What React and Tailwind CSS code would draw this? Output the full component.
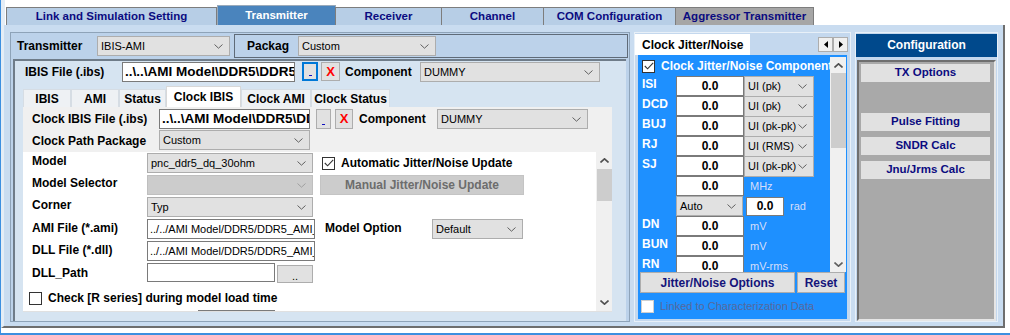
import React from "react";

const navy = "text-[#0b0b80]";

function Chevron({ color = "#5a5a5a", up = false, bold = false }) {
  return (
    <svg width="9" height="5" viewBox="0 0 9 5" className="shrink-0">
      <path
        d={up ? "M0.5 4.5L4.5 0.8L8.5 4.5" : "M0.5 0.5L4.5 4.2L8.5 0.5"}
        fill="none"
        stroke={color}
        strokeWidth={bold ? 1.6 : 1}
      />
    </svg>
  );
}

function Select({ value, w, h = "h-[20px]", disabled = false }) {
  return (
    <div
      className={`${w} ${h} shrink-0 flex items-center justify-between pl-[3px] pr-[6px] border ${
        disabled ? "bg-[#cccccc] border-[#bfbfbf]" : "bg-[#e1e1e1] border-[#adadad]"
      } text-[11px] text-black whitespace-nowrap overflow-hidden`}
    >
      <span>{value}</span>
      <Chevron color={disabled ? "#a0a0a0" : "#606060"} />
    </div>
  );
}

function Field({ value, w, bold = true, center = false, h = "h-[20px]", size = "text-[12px]" }) {
  return (
    <div
      className={`${w} ${h} shrink-0 bg-white border border-[#7a7a7a] px-[2px] flex items-center ${
        center ? "justify-center" : ""
      } ${bold ? `font-bold ${size}` : "text-[11px]"} text-black whitespace-nowrap overflow-hidden`}
    >
      {value}
    </div>
  );
}

function Check({ checked = true, dim = false }) {
  return (
    <div
      className={`w-[13px] h-[13px] shrink-0 bg-white border ${
        dim ? "border-[#cfcfcf]" : "border-[#333]"
      } flex items-center justify-center`}
    >
      {checked && (
        <svg width="10" height="8" viewBox="0 0 10 8">
          <path d="M0.8 4L3.6 6.8L9.2 0.8" fill="none" stroke="#333" strokeWidth="1.1" />
        </svg>
      )}
    </div>
  );
}

function DotButton({ focused = false, w = "w-[16px]", h = "h-[19px]" }) {
  return (
    <div
      className={`${w} ${h} shrink-0 bg-[#e1e1e1] border ${
        focused ? "border-2 border-[#0078d7]" : "border-[#adadad]"
      } flex items-end justify-center pb-[3px]`}
    >
      <div className="w-[3px] h-[1px] bg-[#1010c0]" />
    </div>
  );
}

function XButton({ w = "w-[19px]", h = "h-[19px]" }) {
  return (
    <div
      className={`${w} ${h} shrink-0 bg-[#e1e1e1] border border-[#adadad] flex items-center justify-center text-[13px] font-bold text-[#ff0000]`}
    >
      X
    </div>
  );
}

function Label({ children, className = "" }) {
  return <span className={`text-[12px] font-bold text-black whitespace-nowrap ${className}`}>{children}</span>;
}

function TopTab({ label, w, selected, gray }) {
  if (selected) {
    return (
      <div
        className={`${w} h-[20px] bg-[#4a84bd] border border-[#9ab] border-b-0 flex items-center justify-center text-[11.5px] font-bold text-white`}
      >
        {label}
      </div>
    );
  }
  return (
    <div
      className={`${w} h-[18px] ${
        gray ? "bg-[#a6a6a6]" : "bg-[#b7cee6]"
      } border border-[#7d7d7d] border-b-0 -ml-px flex items-center justify-center text-[11.5px] font-bold ${navy}`}
    >
      {label}
    </div>
  );
}

function SubTab({ label, w, selected }) {
  return (
    <div
      className={`${w} ${
        selected ? "h-[21px] bg-white border-[#d8d8d8]" : "h-[18px] bg-[#eef1f4] border-[#d6dde4]"
      } border border-b-0 flex items-center justify-center text-[12px] font-bold text-black whitespace-nowrap`}
    >
      {label}
    </div>
  );
}

function JRow({ label, unit, children }) {
  return (
    <div className="h-[20px] flex items-center">
      <span className="w-[38px] shrink-0 text-[12px] font-bold text-white pl-[4px] -mt-[4px]">{label}</span>
      {children}
      {unit && <span className="ml-[6px] text-[11px] text-[#d6defa]">{unit}</span>}
    </div>
  );
}

function CfgButton({ label, mt }) {
  return (
    <div
      className={`${mt} ml-[2px] w-[129px] h-[18px] bg-[#e1e1e1] flex items-center justify-center text-[11.5px] font-bold ${navy}`}
    >
      {label}
    </div>
  );
}

export default function App() {
  return (
    <div className="w-[1010px] h-[335px] overflow-hidden bg-white font-['Liberation_Sans',Arial,sans-serif] border-l border-[#3c8fe0]">
      {/* top tabs */}
      <div className="h-[25px] flex items-end pl-[2px] border-l-[4px] border-[#e4edf6]">
        <TopTab label="Link and Simulation Setting" w="w-[211px]" />
        <TopTab label="Transmitter" w="w-[119px]" selected />
        <TopTab label="Receiver" w="w-[107px]" />
        <TopTab label="Channel" w="w-[103px]" />
        <TopTab label="COM Configuration" w="w-[133px]" />
        <TopTab label="Aggressor Transmitter" w="w-[139px]" gray />
      </div>

      {/* body */}
      <div className="h-[303px] w-[1004px] bg-[#c9dcf0] border-l-[3px] border-[#e4edf6] border-r-2 border-r-[#6e6e6e] border-b-2 border-b-[#6e6e6e] flex pt-[7px] pl-[6px]">
        {/* left panel */}
        <div className="w-[620px] h-[290px] bg-[#bcd2ea] border border-[#8ea3b8] flex flex-col">
          <div className="h-[26px] flex items-center">
            <Label className="ml-[6px] w-[80px]">Transmitter</Label>
            <Select value="IBIS-AMI" w="w-[133px]" />
            <div className="ml-[4px] w-[394px] h-[24px] border border-[#5f6b78] flex items-center">
              <Label className="ml-[12px] w-[51px]">Packag</Label>
              <Select value="Custom" w="w-[138px]" />
            </div>
          </div>

          <div className="ml-[2px] w-[613px] flex-1 min-h-0 bg-[#d6e4f1] border-l-2 border-t-2 border-[#6f7c89] flex flex-col">
            <div className="h-[21px] mt-[1px] flex items-start">
              <Label className="ml-[10px] w-[97px] mt-[1px]">IBIS File (.ibs)</Label>
              <Field value="..\..\AMI Model\DDR5\DDR5_AMI" w="w-[173px]" size="text-[13.5px]" />
              <div className="ml-[7px]">
                <DotButton focused />
              </div>
              <div className="ml-[3px]">
                <XButton />
              </div>
              <Label className="ml-[5px] w-[75px] mt-[1px]">Component</Label>
              <Select value="DUMMY" w="w-[180px]" />
            </div>

            <div className="mt-[3px] h-[21px] ml-[8px] flex items-end">
              <SubTab label="IBIS" w="w-[48px]" />
              <SubTab label="AMI" w="w-[48px]" />
              <SubTab label="Status" w="w-[47px]" />
              <SubTab label="Clock IBIS" w="w-[75px]" selected />
              <SubTab label="Clock AMI" w="w-[70px]" />
              <SubTab label="Clock Status" w="w-[79px]" />
            </div>

            <div className="ml-[8px] w-[589px] h-[205px] shrink-0 flex flex-col border-b border-[#e0e0e0] overflow-hidden">
              <div className="h-[45px] shrink-0 bg-[#f0f0f0] flex flex-col pt-[2px]">
                <div className="h-[21px] flex items-start">
                  <Label className="ml-[9px] w-[127px] mt-[1px]">Clock IBIS File (.ibs)</Label>
                  <Field value="..\..\AMI Model\DDR5\DDR5_AMI" w="w-[151px]" size="text-[13.5px]" />
                  <div className="ml-[6px]">
                    <DotButton w="w-[15px]" h="h-[20px]" />
                  </div>
                  <div className="ml-[4px]">
                    <XButton w="w-[18px]" h="h-[20px]" />
                  </div>
                  <Label className="ml-[6px] w-[78px] mt-[1px]">Component</Label>
                  <Select value="DUMMY" w="w-[151px]" />
                </div>
                <div className="h-[21px] flex items-start">
                  <Label className="ml-[9px] w-[127px] mt-[2px]">Clock Path Package</Label>
                  <Select value="Custom" w="w-[151px]" />
                </div>
              </div>

              <div className="flex-1 min-h-0 overflow-hidden bg-white flex">
                <div className="flex-1 flex flex-col pt-[1px] gap-[2px] overflow-hidden">
                  <div className="h-[20px] shrink-0 flex items-center">
                    <Label className="ml-[9px] w-[115px] -mt-[4px]">Model</Label>
                    <Select value="pnc_ddr5_dq_30ohm" w="w-[166px]" />
                    <div className="ml-[9px] flex items-center gap-[6px]">
                      <Check />
                      <Label>Automatic Jitter/Noise Update</Label>
                    </div>
                  </div>
                  <div className="h-[20px] shrink-0 flex items-center">
                    <Label className="ml-[9px] w-[115px] -mt-[4px]">Model Selector</Label>
                    <Select value="" w="w-[166px]" disabled />
                    <div className="ml-[7px] w-[204px] h-[20px] bg-[#cccccc] border border-[#c4c4c4] flex items-center justify-center text-[12px] font-bold text-[#6d6d6d]">
                      Manual Jitter/Noise Update
                    </div>
                  </div>
                  <div className="h-[20px] shrink-0 flex items-center">
                    <Label className="ml-[9px] w-[115px] -mt-[4px]">Corner</Label>
                    <Select value="Typ" w="w-[166px]" />
                  </div>
                  <div className="h-[20px] shrink-0 flex items-center">
                    <Label className="ml-[9px] w-[115px] -mt-[2px]">AMI File (*.ami)</Label>
                    <Field value="../../AMI Model/DDR5/DDR5_AMI_" w="w-[168px]" bold={false} />
                    <Label className="ml-[10px] w-[107px] -mt-[2px]">Model Option</Label>
                    <Select value="Default" w="w-[91px]" />
                  </div>
                  <div className="h-[20px] shrink-0 flex items-center">
                    <Label className="ml-[9px] w-[115px] -mt-[2px]">DLL File (*.dll)</Label>
                    <Field value="../../AMI Model/DDR5/DDR5_AMI_" w="w-[168px]" bold={false} />
                  </div>
                  <div className="h-[20px] shrink-0 flex items-start">
                    <Label className="ml-[9px] w-[115px] mt-[1px]">DLL_Path</Label>
                    <Field value="" w="w-[128px]" h="h-[19px]" />
                    <div className="ml-[2px] mt-[2px] w-[36px] h-[18px] bg-[#e1e1e1] border border-[#adadad] flex items-end justify-center text-[11px] leading-[12px]">
                      ..
                    </div>
                  </div>
                  <div className="h-[20px] shrink-0 mt-[3px] flex items-center">
                    <div className="ml-[6px]">
                      <Check checked={false} />
                    </div>
                    <Label className="ml-[6px]">Check [R series] during model load time</Label>
                  </div>
                  <div className="ml-[175px] w-[77px] h-[10px] shrink-0 border-t border-x border-[#7a7a7a]" />
                </div>
                <div className="w-[16px] bg-[#f0f0f0] flex flex-col items-center">
                  <div className="h-[17px] flex items-center">
                    <Chevron up bold color="#505050" />
                  </div>
                  <div className="w-[15px] h-[32px] bg-[#cdcdcd]" />
                  <div className="flex-1" />
                  <div className="h-[17px] flex items-center">
                    <Chevron bold color="#505050" />
                  </div>
                </div>
              </div>
            </div>
          </div>
        </div>

        {/* jitter panel */}
        <div className="ml-[4px] w-[217px] h-[290px] bg-[#c4d8ee] border border-[#e8f0f8] flex flex-col">
          <div className="h-[22px] flex items-end justify-between">
            <div className="w-[115px] h-[21px] bg-white flex items-center pl-[7px] text-[12px] font-bold text-black">
              Clock Jitter/Noise
            </div>
            <div className="flex mr-[2px] mb-[3px]">
              <div className="w-[15px] h-[15px] bg-[#f0f0f0] border border-[#adadad] flex items-center justify-center">
                <svg width="4" height="7" viewBox="0 0 4 7">
                  <path d="M4 0L0 3.5L4 7Z" fill="#000" />
                </svg>
              </div>
              <div className="w-[15px] h-[15px] bg-[#f0f0f0] border border-[#adadad] flex items-center justify-center">
                <svg width="4" height="7" viewBox="0 0 4 7">
                  <path d="M0 0L4 3.5L0 7Z" fill="#000" />
                </svg>
              </div>
            </div>
          </div>
          <div className="mx-[3px] h-[264px] bg-[#1e90ff] flex flex-col">
            <div className="h-[217px] flex">
              <div className="flex-1 flex flex-col overflow-hidden">
                <div className="h-[20px] mt-[2px] flex items-center">
                  <div className="ml-[4px]">
                    <Check />
                  </div>
                  <span className="ml-[6px] text-[12px] font-bold text-white whitespace-nowrap">
                    Clock Jitter/Noise Components
                  </span>
                </div>
                <div className="mt-[1px]" />
                <JRow label="ISI">
                  <Field value="0.0" w="w-[68px]" center />
                  <Select value="UI (pk)" w="w-[70px]" h="h-[21px]" />
                </JRow>
                <JRow label="DCD">
                  <Field value="0.0" w="w-[68px]" center />
                  <Select value="UI (pk)" w="w-[70px]" h="h-[21px]" />
                </JRow>
                <JRow label="BUJ">
                  <Field value="0.0" w="w-[68px]" center />
                  <Select value="UI (pk-pk)" w="w-[70px]" h="h-[21px]" />
                </JRow>
                <JRow label="RJ">
                  <Field value="0.0" w="w-[68px]" center />
                  <Select value="UI (RMS)" w="w-[70px]" h="h-[21px]" />
                </JRow>
                <JRow label="SJ">
                  <Field value="0.0" w="w-[68px]" center />
                  <Select value="UI (pk-pk)" w="w-[70px]" h="h-[21px]" />
                </JRow>
                <JRow label="" unit="MHz">
                  <Field value="0.0" w="w-[68px]" center />
                </JRow>
                <JRow label="" unit="rad">
                  <Select value="Auto" w="w-[67px]" />
                  <div className="ml-[3px]">
                    <Field value="0.0" w="w-[38px]" center h="h-[19px]" />
                  </div>
                </JRow>
                <JRow label="DN" unit="mV">
                  <Field value="0.0" w="w-[68px]" center />
                </JRow>
                <JRow label="BUN" unit="mV">
                  <Field value="0.0" w="w-[68px]" center />
                </JRow>
                <JRow label="RN" unit="mV-rms">
                  <Field value="0.0" w="w-[68px]" center />
                </JRow>
              </div>
              <div className="w-[16px] mr-[1px] mt-[2px] bg-[#f0f0f0] flex flex-col items-center">
                <div className="h-[16px] flex items-center">
                  <Chevron up bold color="#505050" />
                </div>
                <div className="w-[15px] h-[75px] bg-[#cdcdcd]" />
                <div className="flex-1" />
                <div className="h-[16px] flex items-center">
                  <Chevron bold color="#606060" />
                </div>
              </div>
            </div>
            <div className="h-[21px] flex">
              <div className="ml-[2px] w-[155px] h-[21px] bg-[#e1e1e1] border border-[#adadad] flex items-center justify-center text-[12px] font-bold text-[#14147a]">
                Jitter/Noise Options
              </div>
              <div className="ml-[2px] w-[48px] h-[21px] bg-[#e1e1e1] border border-[#adadad] flex items-center justify-center text-[12px] font-bold text-[#14147a]">
                Reset
              </div>
            </div>
            <div className="mt-[5px] flex items-center">
              <div className="ml-[3px]">
                <Check checked={false} dim />
              </div>
              <span className="ml-[6px] text-[11px] text-[#56689c]">Linked to Characterization Data</span>
            </div>
          </div>
        </div>

        {/* configuration */}
        <div className="ml-[4px] w-[143px] h-[290px] bg-[#c4d8ee] border border-[#e8f0f8] flex flex-col">
          <div className="mt-[1px] h-[23px] bg-[#00498c] flex items-center justify-center text-[12px] font-bold text-white">
            Configuration
          </div>
          <div className="mt-[3px] mx-px h-[262px] bg-[#a9a9a9] border-2 border-t-[#6f6f6f] border-l-[#6f6f6f] border-r-[#e6e6e6] border-b-[#e6e6e6] flex flex-col">
            <CfgButton label="TX Options" mt="mt-[2px]" />
            <CfgButton label="Pulse Fitting" mt="mt-[31px]" />
            <CfgButton label="SNDR Calc" mt="mt-[6px]" />
            <CfgButton label="Jnu/Jrms Calc" mt="mt-[6px]" />
          </div>
        </div>
      </div>
      <div className="h-[5px]" />
      <div className="h-[2px] bg-[#3c8fe0]" />
    </div>
  );
}
